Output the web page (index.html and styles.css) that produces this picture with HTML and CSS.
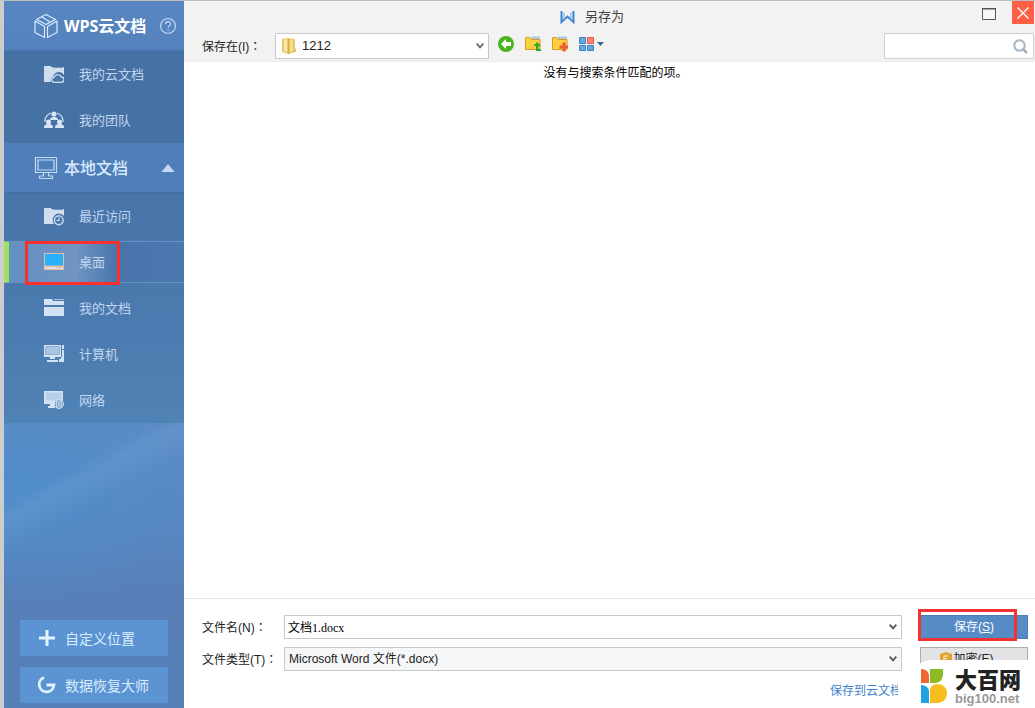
FILE: index.html
```html
<!DOCTYPE html>
<html lang="zh-CN">
<head>
<meta charset="utf-8">
<title>另存为</title>
<link rel="stylesheet" href="styles.css">
</head>
<body>
<div class="window">
  <aside class="sidebar">
    <div class="section section-cloud">
      <svg class="section-icon" width="24" height="26" viewBox="0 0 24 26" fill="none" stroke="#d9ebff" stroke-width="1.2" stroke-linejoin="round"><path d="M12 1.500 21.500 6.500 12 11.500 2.500 6.500zM8 4l8 5M1 8l9.500 5.500V24.500L1 19.500zM23 8l-9.500 5.500V24.500L23 19.500z"/></svg>
      <h2 class="section-title">WPS云文档</h2>
      <button class="help" type="button" aria-label="帮助"><svg width="18" height="18" viewBox="0 0 18 18" fill="none" stroke="#b5d0f0" stroke-width="1.300"><circle cx="9" cy="9" r="7.400"/><path d="M6.600 7.200c0-3.300 5-3.200 5-.2 0 1.800-2.500 1.800-2.500 3.800M9.100 12.200v1.500"/></svg></button>
    </div>
    <nav class="nav">
      <a class="item" href="#"><svg width="20" height="20" viewBox="0 0 20 20"><path fill="#d0def0" d="M0 2h7v1h13v8a6 6 0 0 0-11 2 4 4 0 0 0-2 5H0z"/><path d="M9 3.500h10" stroke="#6f94c0"/><path fill="#4a75a8" stroke="#cfe0f3" stroke-width="1.300" d="M10.500 18.300a2.500 2.500 0 0 1-.3-5 3.700 3.700 0 0 1 7-.4 2.700 2.700 0 0 1 0 5.400z"/></svg>我的云文档</a>
      <a class="item" href="#"><svg width="20" height="20" viewBox="0 0 20 20"><path fill="none" stroke="#d0def0" stroke-width="1.200" d="M1 12a8.500 8.500 0 0 1 6-9M13 3a8.500 8.500 0 0 1 6 9"/><g fill="#d8e5f5"><circle cx="10" cy="4" r="2.600"/><path d="M6 10c0-2 1-2.500 3-3h2c2 .5 3 1 3 3zM0 18c0-3 1-3 3-4h3c2 1 3 1 3 4zM11 18c0-3 1-3 3-4h3c2 1 3 1 3 4z"/><circle cx="4.500" cy="12" r="2.500"/><circle cx="15.500" cy="12" r="2.500"/></g></svg>我的团队</a>
    </nav>
    <div class="section section-local">
      <svg class="section-icon" width="24" height="24" viewBox="0 0 24 24" fill="none" stroke="#c3daf2" stroke-width="1.200"><path d="M1.500 1.500h21v15h-21zM4 4h16v10H4zM9.500 16.500v3.500h-4v2.500h13V20h-4v-3.500"/></svg>
      <h2 class="section-title section-title-local">本地文档</h2>
      <button class="fold" type="button" aria-label="收起"><svg width="14" height="8" viewBox="0 0 14 8"><path fill="#c5daf1" d="M7 0l6.500 8H.5z"/></svg></button>
    </div>
    <nav class="nav nav-local">
      <a class="item" href="#"><svg width="20" height="20" viewBox="0 0 20 20"><path fill="#d0def0" d="M0 2h7v1h13v7a6 6 0 0 0-10 8H0z"/><path d="M9 3.500h10" stroke="#6f94c0"/><circle cx="14.800" cy="14.300" r="4.400" fill="#4b79ac" stroke="#d0def0" stroke-width="1.400"/><path d="M15 11.500v3h-2.500" fill="none" stroke="#d0def0" stroke-width="1.200"/></svg>最近访问</a>
      <a class="item item-current" href="#"><svg width="20" height="20" viewBox="0 0 20 20"><path fill="#dcc0aa" d="M0 1h20v17H0z"/><path fill="#27b1fb" d="M1 2h18v11.500H1z"/><path fill="#e4dce0" d="M1 15h18v2H1z"/><path fill="#c4a99c" d="M12 15h1v1h-1zm2 0h1v1h-1zm2 0h1v1h-1z"/></svg>桌面</a>
      <a class="item" href="#"><svg width="20" height="20" viewBox="0 0 20 20"><path fill="#d3e3f5" d="M0 1h8l1 2h11v4H0zM0 9h20v9H0z"/><path d="M10 1.500h10" stroke="#aac5e3"/></svg>我的文档</a>
      <a class="item" href="#"><svg width="20" height="20" viewBox="0 0 20 20" fill="#d3e3f5"><path fill-rule="evenodd" d="M0 1h17v12H0zm1.500 1.500v8h14v-8zM6 13h5v2H6zM3 16h11v2H3zM18 1h2v17h-5v-3h2v-2h1zM18 5v1h2V5z"/><path fill="#a8c5e3" d="M2 3h13v7H2z"/></svg>计算机</a>
      <a class="item" href="#"><svg width="20" height="20" viewBox="0 0 20 20"><path fill="#d3e3f5" d="M0 1h19v10l-9 3H0zM6 14h4v2H6zM4 16h7v2H4z"/><path fill="#b9d0e9" d="M1.500 2.500h16v8h-16z"/><circle cx="15" cy="14" r="4.500" fill="#487aae" stroke="#d3e3f5"/><path d="M10.500 14h9M15 9.500v9M12 11.500c2 1 4 1 6 0M12 16.500c2-1 4-1 6 0M13.500 10c-1.500 3-1.500 5 0 8M16.500 10c1.500 3 1.500 5 0 8" fill="none" stroke="#d3e3f5" stroke-width=".9"/></svg>网络</a>
    </nav>
    <div class="actions">
      <button class="action" type="button"><svg width="18" height="18" viewBox="0 0 18 18"><path d="M9 1v16M1 9h16" stroke="#e1f4ff" stroke-width="3"/></svg>自定义位置</button>
      <button class="action" type="button"><svg width="18" height="18" viewBox="0 0 18 18" fill="none" stroke="#e1f4ff" stroke-width="2.800"><path d="M6 1.500A7.400 7.400 0 1 0 16 9H8.500"/></svg>数据恢复大师</button>
    </div>
  </aside>

  <main class="main">
    <header class="head">
      <div class="titlebar">
        <h1 class="title"><svg width="15" height="13" viewBox="0 0 15 13"><path d="M1.500 0v11l6-5.500 6 5.500V0" fill="none" stroke="#3b83d6" stroke-width="2"/><path d="M3 1l2 1v5L3 9zM12 1l-2 1v5l2 2z" fill="#a9cbef"/></svg>另存为</h1>
        <button class="winbtn" type="button" aria-label="最大化"><svg width="14" height="12" viewBox="0 0 14 12"><path d="M.5 1h13v10.500H.5z" fill="#f7f7f7" stroke="#555"/><path d="M0 .5h14" stroke="#555"/></svg></button>
        <button class="winbtn winbtn-close" type="button" aria-label="关闭"><svg width="12" height="12" viewBox="0 0 12 12"><path d="M.5.5l11 11M11.500.5l-11 11" stroke="#fff" stroke-width="1.400"/></svg></button>
      </div>
      <div class="toolbar">
        <label class="label label-place" for="place">保存在(I)<span class="colon" lang="zh-TW">：</span></label>
        <div class="combo combo-place">
          <svg class="folder" width="14" height="16" viewBox="0 0 14 16"><path fill="#e5c968" d="M0 1l6-1 7 1v9l1 1v3l-8 2-6-2z"/><path fill="#f8ebb0" d="M2 2l3-1v13l-3-1z"/><path fill="#d3ae3e" d="M6 1h1v15H6z"/><path fill="#f4de8d" d="M8 2l3-1v12l-3 1z"/></svg>
          <select class="control" id="place"><option>1212</option></select>
          <svg class="chevron" width="8" height="6" viewBox="0 0 8 6"><path d="M.7.700L4 4.300 7.300.700" fill="none" stroke="#666" stroke-width="1.800"/></svg>
        </div>
        <div class="tools">
          <button class="tool" type="button" aria-label="后退"><svg width="16" height="16" viewBox="0 0 16 16"><circle cx="8" cy="8" r="8" fill="#48b51c"/><path d="M8 3L3 8l5 5V10h5V6H8z" fill="#fff"/></svg></button>
          <button class="tool" type="button" aria-label="上一级"><svg width="16" height="16" viewBox="0 0 16 16"><path d="M6 .5h9v4H6z" fill="#b7c8d5"/><path d="M.5 1.500h4l2 2h8.500v10H.5z" fill="#ffd03f" stroke="#d59a20"/><path d="M12 6l-3.500 4H11v5h5v-2h-2.500v-3H16z" fill="#32a32c"/></svg></button>
          <button class="tool" type="button" aria-label="新建文件夹"><svg width="16" height="16" viewBox="0 0 16 16"><path d="M6 .5h9v4H6z" fill="#b7c8d5"/><path d="M.5 1.500h4l2 2h8.500v10H.5z" fill="#ffd03f" stroke="#d59a20"/><path d="M12 6.500v9M7.500 11h9" stroke="#ef5a30" stroke-width="3"/></svg></button>
          <button class="tool" type="button" aria-label="视图"><svg width="25" height="14" viewBox="0 0 25 14"><path d="M.5.5h6v6h-6zM.5 8.500h6v5h-6zM8.500 8.500h6v5h-6z" fill="#67a8dc" stroke="#3a82bf"/><path d="M8.500.5h6v6h-6z" fill="#ff8278" stroke="#e4554c"/><path d="M18 5h7l-3.500 4z" fill="#3b6690"/></svg></button>
        </div>
        <div class="search">
          <input class="control" type="text" aria-label="搜索">
          <svg width="15" height="15" viewBox="0 0 15 15" fill="none" stroke="#a3b5c7"><circle cx="6.500" cy="6.500" r="5.200" stroke-width="2"/><path d="M10.500 10.500l3.500 3.500" stroke="#9ba5b0" stroke-width="2.400"/></svg>
        </div>
      </div>
    </header>

    <section class="files"><p class="empty">没有与搜索条件匹配的项。</p></section>

    <footer class="foot">
      <label class="label" for="name">文件名(N)<span class="colon" lang="zh-TW">：</span></label>
      <div class="combo">
        <input class="control control-name" id="name" type="text" value="文档1.docx">
        <svg class="chevron" width="8" height="6" viewBox="0 0 8 6"><path d="M.7.700L4 4.300 7.300.700" fill="none" stroke="#555" stroke-width="1.800"/></svg>
      </div>
      <div class="save-cell"><button class="btn btn-save" type="button">保存(<u>S</u>)</button></div>
      <label class="label" for="type">文件类型(T)<span class="colon" lang="zh-TW">：</span></label>
      <div class="combo combo-type">
        <select class="control" id="type"><option>Microsoft Word 文件(*.docx)</option></select>
        <svg class="chevron" width="8" height="6" viewBox="0 0 8 6"><path d="M.7.700L4 4.300 7.300.700" fill="none" stroke="#555" stroke-width="1.800"/></svg>
      </div>
      <button class="btn btn-encrypt" type="button"><svg width="12" height="14" viewBox="0 0 12 14"><path d="M6 0l6 2v6c0 3-3 5-6 6-3-1-6-3-6-6V2z" fill="#dfa234"/><path d="M4 9V4h4M4 6.500h3M4 9h4" stroke="#fff3cf" fill="none"/></svg>加密(E)</button>
      <a class="cloud-link" href="#">保存到云文档</a>
    </footer>
  </main>

  <div class="badge">
    <svg width="26" height="34" viewBox="0 0 26 34"><path fill="#ef6731" d="M0 0c5 0 8 3 8 7v7H0z"/><path fill="#8bbb25" d="M9 0h13v5c0 5-3 9-8 9H9z"/><path fill="#1fa3e0" d="M0 16c5 0 8 3 8 7v11H0z"/><path fill="#f8be1f" d="M9 34V22c0-4 3-7 7-7 6 0 10 4 10 9 0 6-4 10-10 10z"/></svg>
    <div class="badge-text"><strong class="badge-name">大百网</strong><span class="badge-site">big100.net</span></div>
  </div>
</div>
</body>
</html>
```
FILE: styles.css
```css
* { box-sizing: border-box; }

body {
  margin: 0;
  font: 12px/20px "Liberation Sans", "Noto Sans CJK SC", sans-serif;
  color: #222;
}

button, input, select { font: inherit; color: inherit; }
button { padding: 0; border: 0; background: none; }
a { text-decoration: none; }
svg { display: block; flex: none; }
h1, h2, p { margin: 0; }

.window {
  position: relative;
  display: flex;
  min-height: 100vh;
  border-top: 1px solid #bdbdbd;
  border-left: 4px solid #cdcdcd;
  background: #fff;
}

/* Sidebar */
.sidebar {
  display: flex;
  flex-direction: column;
  flex: none;
  width: 180px;
  font-family: "Noto Sans CJK SC", sans-serif;
  background:
    linear-gradient(152deg, transparent 59%, rgba(115, 165, 215, .3) 64%, transparent 72%) 0 280px / 100% 280px no-repeat,
    radial-gradient(ellipse 190px 120px at 10% 69%, #508dca 0, transparent 100%),
    linear-gradient(#5a87c1 0, #4f80bd 25%, #5c8bc5 62%, #5888c2 72%, #587fb7 84%, #567fb8 100%);
}

.section {
  display: flex;
  align-items: center;
  height: 50px;
  padding: 0 7px 0 30px;
}
.section-cloud { background: linear-gradient(#5986c1, #5382bd); border-bottom: 1px solid #4778af; }
.section-local { background: #4f7eb8; border-bottom: 1px solid #41709f; }
.section-icon { margin-right: 6px; }
.section-title {
  flex: 1;
  font: 700 16px/24px "Open Sans", "Noto Sans CJK SC", sans-serif;
  color: #fff;
  white-space: nowrap;
}
.section-title-local { font-weight: 500; color: #d8eaff; }
.fold { margin-right: 2px; }

.nav { background: #4671a4; }
.nav-local { background: linear-gradient(#4875a9, #4b7bb0 60%, #5083b5); }
.item {
  display: flex;
  align-items: center;
  gap: 15px;
  height: 46px;
  padding-left: 40px;
  font-size: 13px;
  color: #c0d5ee;
}
.item-current {
  position: relative;
  height: 42px;
  margin: 2px 0;
  padding-left: 35px;
  border: solid #6792c2;
  border-width: 1px 0;
  border-left: 5px solid #9fe060;
  background: linear-gradient(90deg, #638fc1, #7295c2 38%, #4775ab 62%, #4b79af);
  background-clip: padding-box;
}
.item-current::after {
  content: "";
  position: absolute;
  inset: -1px 64px -3px 16px;
  border: 3px solid #f8302e;
}

.actions {
  display: flex;
  flex-direction: column;
  gap: 11px;
  margin-top: auto;
  padding: 0 16px 5px;
}
.action {
  display: flex;
  align-items: center;
  gap: 9px;
  height: 36px;
  padding-left: 18px;
  font-size: 14px;
  color: #d9edff;
  background: #5c93d2;
}

/* Header */
.main { display: flex; flex: 1; flex-direction: column; min-width: 0; }
.head { padding-bottom: 2px; background: #f2f2f2; border-bottom: 1px solid #ececec; }
.titlebar {
  display: flex;
  align-items: flex-start;
  height: 32px;
  padding-right: 1px;
}
.title {
  display: flex;
  flex: 1;
  align-items: center;
  justify-content: center;
  gap: 10px;
  height: 32px;
  padding-left: 34px;
  font-size: 13px;
  font-weight: 400;
  color: #444;
}
.winbtn {
  display: grid;
  place-items: center;
  width: 46px;
  height: 26px;
}
.winbtn-close { width: 22px; height: 23px; background: #ff6045; }

.toolbar {
  display: flex;
  align-items: center;
  padding: 0 1px 0 18px;
}
.label { white-space: nowrap; }
.label-place { width: 73px; }
.colon { font-family: "Noto Sans CJK TC", sans-serif; }

.combo {
  position: relative;
  display: flex;
  align-items: center;
  height: 24px;
  border: 1px solid #c6c8ca;
  background: #fff;
}
.combo-place { width: 214px; height: 26px; padding-left: 6px; font-size: 13px; }
.combo-type { background: #f6f7f8; }
.control {
  flex: 1;
  min-width: 0;
  height: 100%;
  padding: 0 20px 0 4px;
  border: 0;
  outline: 0;
  appearance: none;
  background: transparent;
}
.combo-place .control { padding-left: 6px; }
.control-name { padding-left: 3px; font: 12px "Liberation Serif", "Noto Sans CJK SC", serif; color: #000; }
.chevron { position: absolute; right: 4px; pointer-events: none; }

.tools { display: flex; align-items: center; gap: 11px; padding: 0 9px 5px; }
.search {
  display: flex;
  align-items: center;
  width: 150px;
  height: 26px;
  margin-left: auto;
  padding-right: 5px;
  border: 1px solid #cbd1d8;
  background: #fff;
}

.files { flex: 1; }
.empty { padding: 1px 0 0 12px; text-align: center; color: #000; }

/* Footer */
.foot {
  display: grid;
  grid-template-columns: 82px minmax(0, 1fr) 108px;
  grid-auto-rows: 24px;
  align-items: center;
  row-gap: 8px;
  padding: 16px 7px 5px 18px;
  border-top: 1px solid #e4e4e4;
}
.foot .combo { margin-right: 18px; }
.btn {
  display: flex;
  align-items: center;
  justify-content: center;
  width: 100%;
  height: 24px;
}
.save-cell { position: relative; }
.save-cell::after {
  content: "";
  position: absolute;
  inset: -6px 11px -2px -2px;
  border: 3px solid #f23331;
  pointer-events: none;
}
.btn-save { border: 1px solid #4a7db7; color: #fff; background: #568bc6; }
.btn-encrypt { gap: 2px; padding-right: 15px; border: 1px solid #acacac; background: #e3e3e5; }
.cloud-link {
  grid-column: 2;
  justify-self: end;
  width: 68px;
  margin-right: 22px;
  overflow: hidden;
  white-space: nowrap;
  color: #3e84cc;
}

/* Site badge over the lower right corner */
.badge {
  position: absolute;
  right: 0;
  bottom: 0;
  display: flex;
  gap: 8px;
  width: 118px;
  height: 48px;
  padding: 9px 0 0 4px;
  border-top-left-radius: 16px 8px;
  background: #fff;
}
.badge-text { display: flex; flex-direction: column; }
.badge-name { font-size: 22px; font-weight: 900; line-height: 24px; color: #222; }
.badge-site { font-size: 13px; font-weight: 700; line-height: 12px; color: #999; }
```
